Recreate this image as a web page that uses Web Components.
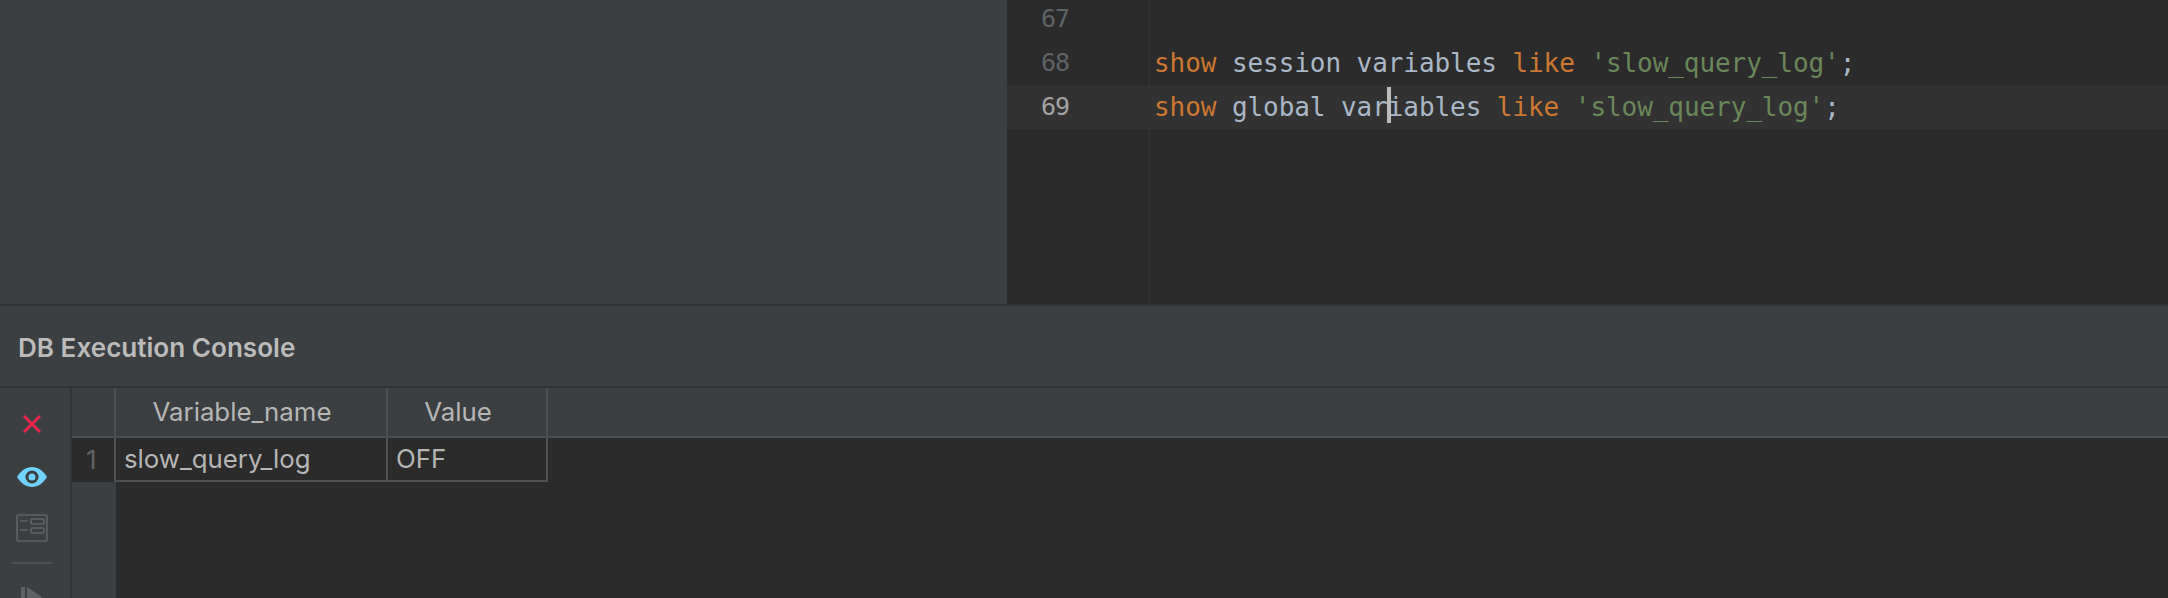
<!DOCTYPE html>
<html>
<head>
<meta charset="utf-8">
<style>
  html, body { margin: 0; background: #2b2b2b; overflow: hidden; }
</style>
</head>
<body>
<ide-window>
  <code-editor slot="editor">
    <code-line num="67"></code-line>
    <code-line num="68"><i class="k">show</i> session variables <i class="k">like</i> <i class="s">'slow_query_log'</i>;</code-line>
    <code-line num="69" current><i class="k">show</i> global var<text-caret></text-caret>iables <i class="k">like</i> <i class="s">'slow_query_log'</i>;</code-line>
  </code-editor>
  <console-panel slot="console" title-text="DB Execution Console">
    <tool-strip slot="tools"></tool-strip>
    <result-table slot="results"></result-table>
  </console-panel>
</ide-window>

<script>
// main window: project panel + editor on top, console below
class IdeWindow extends HTMLElement {
  constructor() {
    super();
    this.attachShadow({ mode: 'open' });
    this.shadowRoot.innerHTML = `
      <style>
        :host { display: flex; flex-direction: column; width: 2168px; height: 598px; overflow: hidden; }
        .top { display: flex; height: 304px; flex: none; border-bottom: 2px solid #323232; }
        .side { width: 1007px; flex: none; background: #3c3f41; }
        .main { flex: 1; min-width: 0; display: flex; }
        .bottom { flex: 1; min-height: 0; display: flex; }
      </style>
      <div class="top">
        <div class="side"></div>
        <div class="main"><slot name="editor"></slot></div>
      </div>
      <div class="bottom"><slot name="console"></slot></div>
    `;
  }
}

class CodeEditor extends HTMLElement {
  constructor() {
    super();
    this.attachShadow({ mode: 'open' });
    this.shadowRoot.innerHTML = `
      <style>
        :host { display: block; flex: 1; position: relative; background: #2b2b2b; overflow: hidden; }
        .lines { margin-top: -3px; }
        .rule { position: absolute; left: 141px; top: 0; bottom: 0; width: 2px; background: #323232; }
      </style>
      <div class="rule"></div>
      <div class="lines"><slot></slot></div>
    `;
  }
}

class CodeLine extends HTMLElement {
  constructor() {
    super();
    this.attachShadow({ mode: 'open' });
    this.shadowRoot.innerHTML = `
      <style>
        :host { display: flex; height: 44px; align-items: center; font: 26px/44px "DejaVu Sans Mono", monospace; }
        :host([current]) { background: #323232; }
        .num { width: 147px; flex: none; box-sizing: border-box; padding-left: 34px; color: #606366; font-size: 25px; letter-spacing: -1px; }
        :host([current]) .num { color: #a4a3a3; }
        .code { color: #a9b7c6; letter-spacing: -.07px; white-space: pre; }
        ::slotted(.k) { color: #cc7832; font-style: normal; }
        ::slotted(.s) { color: #6a8759; font-style: normal; }
      </style>
      <span class="num"></span><span class="code"><slot></slot></span>
    `;
    this.shadowRoot.querySelector('.num').textContent = this.getAttribute('num');
  }
}

class TextCaret extends HTMLElement {
  constructor() {
    super();
    this.attachShadow({ mode: 'open' });
    this.shadowRoot.innerHTML = `<style>
        :host { display: inline-block; position: relative; width: 0; height: 0; white-space: normal; }
        div { position: absolute; left: -1px; top: -29px; width: 4px; height: 36px; background: #bbbbbb; }
      </style><div></div>`;
  }
}

class ConsolePanel extends HTMLElement {
  constructor() {
    super();
    this.attachShadow({ mode: 'open' });
    this.shadowRoot.innerHTML = `
      <style>
        :host { display: flex; flex-direction: column; flex: 1; min-width: 0; background: #3c3f41; }
        .title { flex: none; display: flex; align-items: center; padding: 2px 0 0 18px; box-sizing: border-box;
          border-bottom: 2px solid #323232; height: 82px;
          font: 600 26.100px "Inter", sans-serif; color: #bbbbbb; }
        .body { flex: 1; min-height: 0; display: flex; }
      </style>
      <div class="title"></div>
      <div class="body"><slot name="tools"></slot><slot name="results"></slot></div>
    `;
    this.shadowRoot.querySelector('.title').textContent = this.getAttribute('title-text');
  }
}

class ToolStrip extends HTMLElement {
  constructor() {
    super();
    this.attachShadow({ mode: 'open' });
    this.shadowRoot.innerHTML = `
      <style>
        :host { display: flex; flex-direction: column; align-items: center; box-sizing: border-box; width: 72px; padding-right: 6px; flex: none;
          border-right: 2px solid #323232; background: #3c3f41; overflow: hidden; }
        svg { display: block; flex: none; }
        .stop { margin-top: 26px; }
        .eye { margin-top: 33px; }
        .form { margin-top: 27px; }
        hr { width: 40px; height: 2px; margin: 20px 0 0; border: 0; background: #515151; flex: none; }
        .play { margin-top: 23px; }
      </style>
      <svg class="stop" width="20" height="20" viewBox="0 0 20 20">
        <path d="M2 2L18 18M18 2L2 18" stroke="#f0234b" stroke-width="2.600" fill="none"/>
      </svg>
      <svg class="eye" width="30" height="20" viewBox="0 0 30 20">
        <path fill-rule="evenodd" fill="#6fd3fb" d="M0 10C4 3.500 9 0 15 0S26 3.500 30 10C26 16.500 21 20 15 20S4 16.500 0 10ZM15 3.500A6.500 6.500 0 1 0 15 16.500A6.500 6.500 0 1 0 15 3.500ZM15 6.500A3.500 3.500 0 1 1 15 13.500A3.500 3.500 0 1 1 15 6.500Z"/>
      </svg>
      <svg class="form" width="32" height="28" viewBox="0 0 32 28" fill="none" stroke="#5f6264" stroke-width="1.700">
        <rect x="1" y="1" width="30" height="26" rx="2"/>
        <path d="M4 7H12M4 16H12"/>
        <rect x="15" y="5" width="13" height="5" rx="1"/>
        <rect x="15" y="14" width="13" height="5" rx="1"/>
      </svg>
      <hr>
      <svg class="play" width="24" height="24" viewBox="0 0 24 24" fill="#5f6264">
        <rect x="1" y="0" width="4" height="24"/>
        <path d="M7 0L22 10L7 22Z"/>
      </svg>
    `;
  }
}

class ResultTable extends HTMLElement {
  constructor() {
    super();
    this.attachShadow({ mode: 'open' });
    this.shadowRoot.innerHTML = `
      <style>
        :host { display: flex; flex-direction: column; flex: 1; min-width: 0; background: #2b2b2b;
          font: 25.800px "Inter", sans-serif; color: #b6b6b6; }
        .row { display: flex; flex: none; }
        .head { height: 50px; background: #3c3f41; border-bottom: 2px solid #4d5052; box-sizing: border-box; }
        .data { height: 44px; }
        .cell { box-sizing: border-box; border-right: 2px solid #4d5052; display: flex; align-items: center; white-space: nowrap; }
        .no { width: 44px; }
        .c1 { width: 272px; }
        .c2 { width: 160px; }
        .head .cell { justify-content: center; padding: 0 18px 1px 0; }
        .data .cell { padding: 0 0 1px 8px; }
        .data .c1, .data .c2 { border-bottom: 2px solid #4d5052; }
        .data .no { padding: 0 0 2px 14px; color: #606366; }
        .rest { flex: 1; min-height: 0; display: flex; }
        .rest div { width: 44px; background: #3c3f41; }
      </style>
      <div class="row head">
        <div class="cell no"></div>
        <div class="cell c1">Variable_name</div>
        <div class="cell c2">Value</div>
      </div>
      <div class="row data">
        <div class="cell no">1</div>
        <div class="cell c1">slow_query_log</div>
        <div class="cell c2">OFF</div>
      </div>
      <div class="rest"><div></div></div>
    `;
  }
}

customElements.define('ide-window', IdeWindow);
customElements.define('code-editor', CodeEditor);
customElements.define('code-line', CodeLine);
customElements.define('text-caret', TextCaret);
customElements.define('console-panel', ConsolePanel);
customElements.define('tool-strip', ToolStrip);
customElements.define('result-table', ResultTable);
</script>
</body>
</html>
